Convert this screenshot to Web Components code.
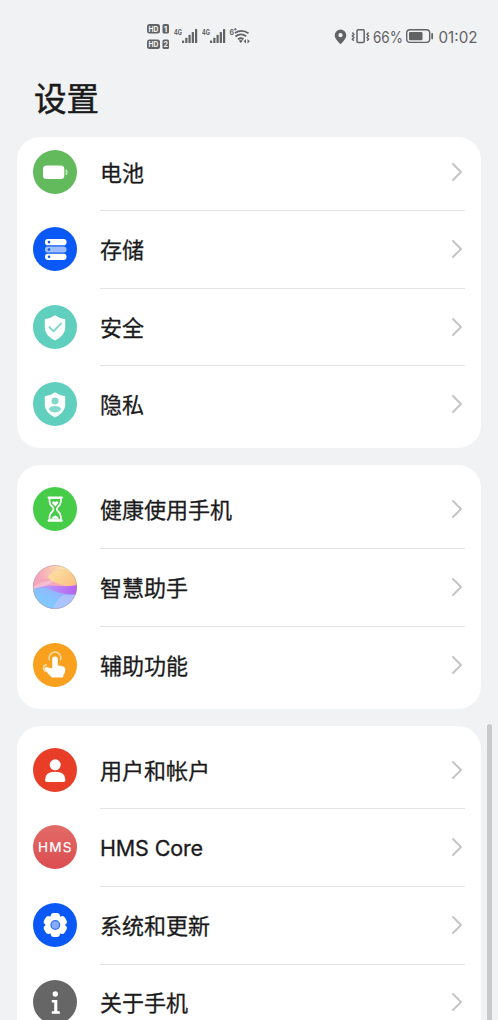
<!DOCTYPE html>
<html lang="zh-CN">
<head>
<meta charset="utf-8">
<title>设置</title>
<style>
html,body{margin:0;height:100%;overflow:hidden;background:#f1f2f4}
</style>
</head>
<body>
<settings-page></settings-page>
<script>
const CJK = '"Noto Sans CJK SC", sans-serif';
const define = (name, html, setup) => customElements.define(name, class extends HTMLElement {
  connectedCallback() {
    if (this.shadowRoot) return;
    const t = document.createElement('template');
    t.innerHTML = html;
    const content = t.content.cloneNode(true);
    if (setup) setup(this, content);
    this.attachShadow({mode: 'open'}).append(content);
  }
});

// Each glyph is drawn in a 44 x 44 box.
const disc = c => `<circle cx="22" cy="22" r="22" fill="${c}"/>`;
const shield = '<path d="M22 10.300q4.500 3.400 10.200 3.900v8.800q0 7.200-10.200 12.500Q11.800 30.200 11.800 23v-8.800q5.700-.5 10.200-3.900z" fill="#fff"/>';
const ICONS = {
  battery: disc('#63ba5d') + '<rect x="10" y="15.500" width="21.300" height="13.500" rx="3.500" fill="#fff"/><path d="M32.500 19.500h.8q1.200 0 1.200 1.200v3.200q0 1.200-1.200 1.200h-.8z" fill="#b9e2b6"/>',
  storage: disc('#0a59f7') + '<rect x="12" y="12" width="21.500" height="6.200" rx="2.800" fill="#fff"/><rect x="12" y="19.400" width="21.500" height="6.200" rx="2.800" fill="#9dbdfc"/><rect x="12" y="26.700" width="21.500" height="6.200" rx="2.800" fill="#fff"/><g fill="#0a59f7"><circle cx="16" cy="15.100" r="1.300"/><circle cx="16" cy="22.500" r="1.300"/><circle cx="16" cy="29.800" r="1.300"/></g>',
  security: disc('#61cfbe') + shield + '<path d="M16.500 22.200l4 4 7.500-7.600" fill="none" stroke="#83d9cc" stroke-width="2" stroke-linecap="round" stroke-linejoin="round"/>',
  privacy: disc('#61cfbe') + shield + '<g fill="#83d9cc"><circle cx="22" cy="19" r="3.500"/><path d="M15.800 27q1-3 6.200-3t6.200 3q-1.800 3.500-6.200 3.500t-6.200-3.500z"/></g>',
  hourglass: disc('#47cc4a') + '<path d="M15.600 10.600h13.200M15.600 33.600h13.200" stroke="#fff" stroke-width="2.200" stroke-linecap="round"/><path d="M16.500 11v3.500q0 3 3.200 5.700 1.600 1.900 0 3.800-3.200 2.700-3.200 5.700v3.500h11.400v-3.500q0-3-3.200-5.700-1.600-1.900 0-3.800 3.200-2.700 3.200-5.700v-3.500z" fill="none" stroke="#fff" stroke-width="1.700"/><path d="M22.200 19.600l-2.800-3.200q-.9-1.500.6-2 1.400-.2 2.200.9.900-1.100 2.200-.9 1.500.5.600 2zM18.300 31.700q.4-2 3.900-3.200 3.500 1.200 3.900 3.200z" fill="#fff"/>',
  assistant: `<defs><clipPath id="c"><circle cx="22" cy="22" r="22"/></clipPath>
    <filter id="soft" x="-10%" y="-10%" width="120%" height="120%"><feGaussianBlur stdDeviation=".7"/></filter>
    <linearGradient id="top" x1="0" x2="1" y1=".3" y2="0"><stop offset=".1" stop-color="#f3a3bd"/><stop offset=".45" stop-color="#fbc8b4"/><stop offset=".8" stop-color="#fdf0a6"/></linearGradient>
    <linearGradient id="gold" x1="0" x2="1" y1="0" y2=".6"><stop stop-color="#fce3a6"/><stop offset="1" stop-color="#fbc183"/></linearGradient>
    <linearGradient id="pink" x1="0" x2="1"><stop stop-color="#f3a6b4"/><stop offset=".45" stop-color="#f7a9be"/><stop offset="1" stop-color="#f58fb4"/></linearGradient>
    <linearGradient id="vio" x1="0" x2="1"><stop stop-color="#a9b5fb"/><stop offset=".45" stop-color="#b98cf8"/><stop offset="1" stop-color="#b65cf0"/></linearGradient>
    <linearGradient id="low" x1="0" x2=".9" y1="1" y2="0"><stop stop-color="#77d4ff"/><stop offset=".5" stop-color="#86c3ff"/><stop offset="1" stop-color="#a6a2fb"/></linearGradient></defs>
    <g clip-path="url(#c)"><path fill="url(#top)" d="M0 0h44v44H0z"/><g filter="url(#soft)"><path fill="url(#gold)" d="M15 12q6-9 17-8 8 4 14 12v8H24z"/><path fill="url(#pink)" d="M-2 17q9-5 17-3 12 7 20 7 6 0 11-3v14H-2z"/><path fill="#f6c6dd" opacity=".7" d="M-2 23q14-9 23-7-9 6-23 10z"/><path fill="url(#vio)" d="M-2 25q14-6 26-4 12 1 22-1v26H-2z"/><path fill="url(#low)" d="M-2 25q10-4 19-1 12 7 29 5v17H-2z"/><path fill="#b5c6ff" opacity=".75" d="M30 30q8 1 16-1v17H19q3-10 11-16z"/></g></g><circle cx="22" cy="22" r="21.600" fill="none" stroke="#9c8598" stroke-opacity=".45" stroke-width=".8"/>`,
  touch: disc('#f9a01e') + '<path d="M19.200 16.300q0-2.700 2.800-2.700t2.800 2.700v6l5.400 1.200q2.500.7 2.200 3.200l-.8 3.300q-.4 1.300-1.200 2.200v.9q0 1.500-1.500 1.500h-9.200q-1.200 0-1.900-1l-6.100-6.900q-1-1.400.2-2.200.9-.6 2.300-.2l5 1.300z" fill="#fff"/><path d="M16.400 16.800a5.900 5.900 0 1 1 11.200 0M13.400 21.800q-2.900.5-2.900 3.300 0 2 1.500 3.400" fill="none" stroke="#fde0a8" stroke-width="1.400" stroke-linecap="round"/>',
  user: disc('#e83e27') + '<circle cx="22.200" cy="16.800" r="5.500" fill="#fff"/><path d="M12 32q0-8.200 10.200-8.200T32.400 32q0 2-1.800 2H13.800q-1.800 0-1.800-2z" fill="#fff"/>',
  hms: '<defs><linearGradient id="h" x2="0" y2="1"><stop stop-color="#e26b68"/><stop offset="1" stop-color="#dc4d50"/></linearGradient></defs>' + disc('url(#h)') + '<text x="5" y="27" textLength="33.500" lengthAdjust="spacing" font-family="Inter,sans-serif" font-size="13.500" font-weight="500" fill="#fff">HMS</text>',
  gear: disc('#0a59f7') + '<g fill="#fff"><circle cx="22.300" cy="22" r="10"/>' + [0,60,120].map(a => `<rect x="17.700" y="10" width="9.200" height="24" rx="3.200" transform="rotate(${a} 22.300 22)"/>`).join('') + '</g><circle cx="22.300" cy="22" r="4.300" fill="#85adfb" stroke="#3472f5" stroke-width="1.300"/>',
  about: disc('#666') + '<circle cx="22.300" cy="14" r="2.700" fill="#fff"/><path d="M18.800 20h5.500v11.300h2.500v2.400h-8v-2.400h2.400v-8.900h-2.400z" fill="#fff"/>'
};

define('app-icon', `<style>:host{display:block;flex:none;width:44px;height:44px}svg{display:block;overflow:visible}</style><svg width="44" height="44" viewBox="0 0 44 44"></svg>`,
  (el, root) => { root.querySelector('svg').innerHTML = ICONS[el.getAttribute('name')]; });

define('settings-row', `<style>
:host{display:flex;height:77.600px;padding:0 16px;box-sizing:border-box;align-items:center;gap:22.500px}
.body{flex:1;align-self:stretch;display:flex;align-items:center;justify-content:space-between;border-bottom:1px solid #e3e3e4;margin-bottom:-1px;box-sizing:border-box}
:host(:last-child) .body{border-color:transparent}
.label{font:400 22px/32px ${CJK};-webkit-text-stroke:.3px #1b1b1c;color:#1b1b1c;white-space:nowrap;margin:0 0 2px .5px}
:host(.latin) .label{font:400 21.500px/32px Inter,${CJK};letter-spacing:-.15px;margin-bottom:-1px}
svg{display:block;margin-right:2px}
</style><app-icon></app-icon><div class="body"><span class="label"><slot></slot></span>
<svg width="12" height="20" viewBox="0 0 12 20"><path d="M2 2l8 8-8 8" fill="none" stroke="#c5c5c6" stroke-width="2" stroke-linecap="round" stroke-linejoin="round"/></svg></div>`,
  (el, root) => root.querySelector('app-icon').setAttribute('name', el.getAttribute('icon')));

define('settings-card', `<style>:host{display:block;flex:none;background:#fff;border-radius:23px;padding:5.300px 0;overflow:hidden}
:host([scrolled]){padding-top:0}:host([scrolled]) .rows{margin-top:-4.300px}</style><div class="rows"><slot></slot></div>`);

const signal = x => `<text x="${x}" y="19.500" font-size="7.500" font-weight="700" textLength="8" lengthAdjust="spacingAndGlyphs">4G</text>` +
  [0,1,2,3,4].map(i => `<rect x="${x + 8 + i*3.250}" y="${25.500 - i*2.850}" width="2.200" height="${2.500 + i*2.850}" rx=".6"/>`).join('');
define('status-bar', `<style>:host{display:flex;height:56px;padding:0 19px 0 147px;justify-content:space-between;align-items:flex-start;box-sizing:border-box}
svg{display:block;margin-top:15px;overflow:visible}svg text{font-family:Inter,sans-serif}</style>
<svg width="106" height="40" viewBox="0 0 106 40" fill="#626365">
<rect y="9" width="13" height="9.500" rx="2.500"/><rect x="15.500" y="9" width="6.500" height="9.500" rx="1.500"/>
<rect y="24.500" width="13" height="9.500" rx="2.500"/><rect x="15.500" y="24.500" width="6.500" height="9.500" rx="1.500"/>
<g fill="#f1f2f4" font-size="8" font-weight="700"><text x="1.500" y="16.600" textLength="10" lengthAdjust="spacingAndGlyphs">HD</text><text x="16.800" y="16.600">1</text><text x="1.500" y="32.100" textLength="10" lengthAdjust="spacingAndGlyphs">HD</text><text x="16.500" y="32.100" textLength="4.500" lengthAdjust="spacingAndGlyphs">2</text></g>
${signal(27)}${signal(55)}
<text x="82.500" y="19.500" font-size="8" font-weight="700" textLength="4.500" lengthAdjust="spacingAndGlyphs">6</text><path d="M87 14.300h2.600M88.300 13v2.600" stroke="#626365" stroke-width=".9"/>
<g fill="none" stroke="#626365" stroke-width="1.800"><path d="M88 18q6.500-4.400 13.500.2M88.500 21.400q5.500-4 10.800 0M91 24.300q3-2.200 5.500 0"/></g><path d="M91.800 25.800q2-1.400 4 0l-2 2.200zM99 24l-2.300 2.300 2.300 2.200zM100.500 24l2.300 2.300-2.300 2.200z"/></svg>
<svg width="146" height="40" viewBox="0 0 146 40" fill="#626365">
<path fill-rule="evenodd" d="M7.500 14.500a5.800 5.800 0 0 1 5.800 5.800q0 3.700-5.800 8.900-5.800-5.200-5.800-8.900a5.800 5.800 0 0 1 5.800-5.800zm0 3.600a2.100 2.100 0 1 0 0 4.200 2.100 2.100 0 0 0 0-4.200z"/>
<rect x="24" y="14.800" width="7.200" height="12.700" rx="1.200" fill="none" stroke="#626365" stroke-width="1.500"/>
<path d="M19.300 17.500l1.600 1.700-1.600 1.700 1.600 1.700-1.600 1.700 1.600 1.500M35.600 17.500l-1.600 1.700 1.600 1.700-1.600 1.700 1.600 1.700-1.600 1.500" fill="none" stroke="#626365" stroke-width="1.400"/>
<text x="40" y="27.500" font-size="15.700" textLength="30" lengthAdjust="spacingAndGlyphs">66%</text>
<rect x="73.700" y="14.800" width="23" height="12.600" rx="3.300" fill="none" stroke="#626365" stroke-width="1.400"/><rect x="76" y="17" width="13.500" height="8.300" rx="1"/><rect x="98.300" y="18" width="1.700" height="6.400" rx=".8"/>
<text x="105.500" y="27.500" font-size="15.700" textLength="39" lengthAdjust="spacingAndGlyphs">01:02</text></svg>`);

define('settings-page', `<style>
:host{display:flex;flex-direction:column;height:100vh;background:#f1f2f4;position:relative;overflow:hidden}
h1{margin:0;height:81px;flex:none;box-sizing:border-box;padding:17px 0 0 34px;font:400 32.500px/48px ${CJK};-webkit-text-stroke:.5px #1b1b1c;color:#1b1b1c}
main{flex:1;min-height:0;display:flex;flex-direction:column;gap:16.900px;padding:0 17px;overflow:hidden}
.thumb{position:absolute;right:6px;top:724px;width:5px;bottom:-10px;border-radius:3px;background:#c8c9cb}
</style>
<status-bar></status-bar><h1>设置</h1>
<main>
<settings-card scrolled><settings-row icon="battery">电池</settings-row><settings-row icon="storage">存储</settings-row><settings-row icon="security">安全</settings-row><settings-row icon="privacy">隐私</settings-row></settings-card>
<settings-card><settings-row icon="hourglass">健康使用手机</settings-row><settings-row icon="assistant">智慧助手</settings-row><settings-row icon="touch">辅助功能</settings-row></settings-card>
<settings-card><settings-row icon="user">用户和帐户</settings-row><settings-row class="latin" icon="hms">HMS Core</settings-row><settings-row icon="gear">系统和更新</settings-row><settings-row icon="about">关于手机</settings-row></settings-card>
</main><div class="thumb"></div>`);
</script>
</body>
</html>
